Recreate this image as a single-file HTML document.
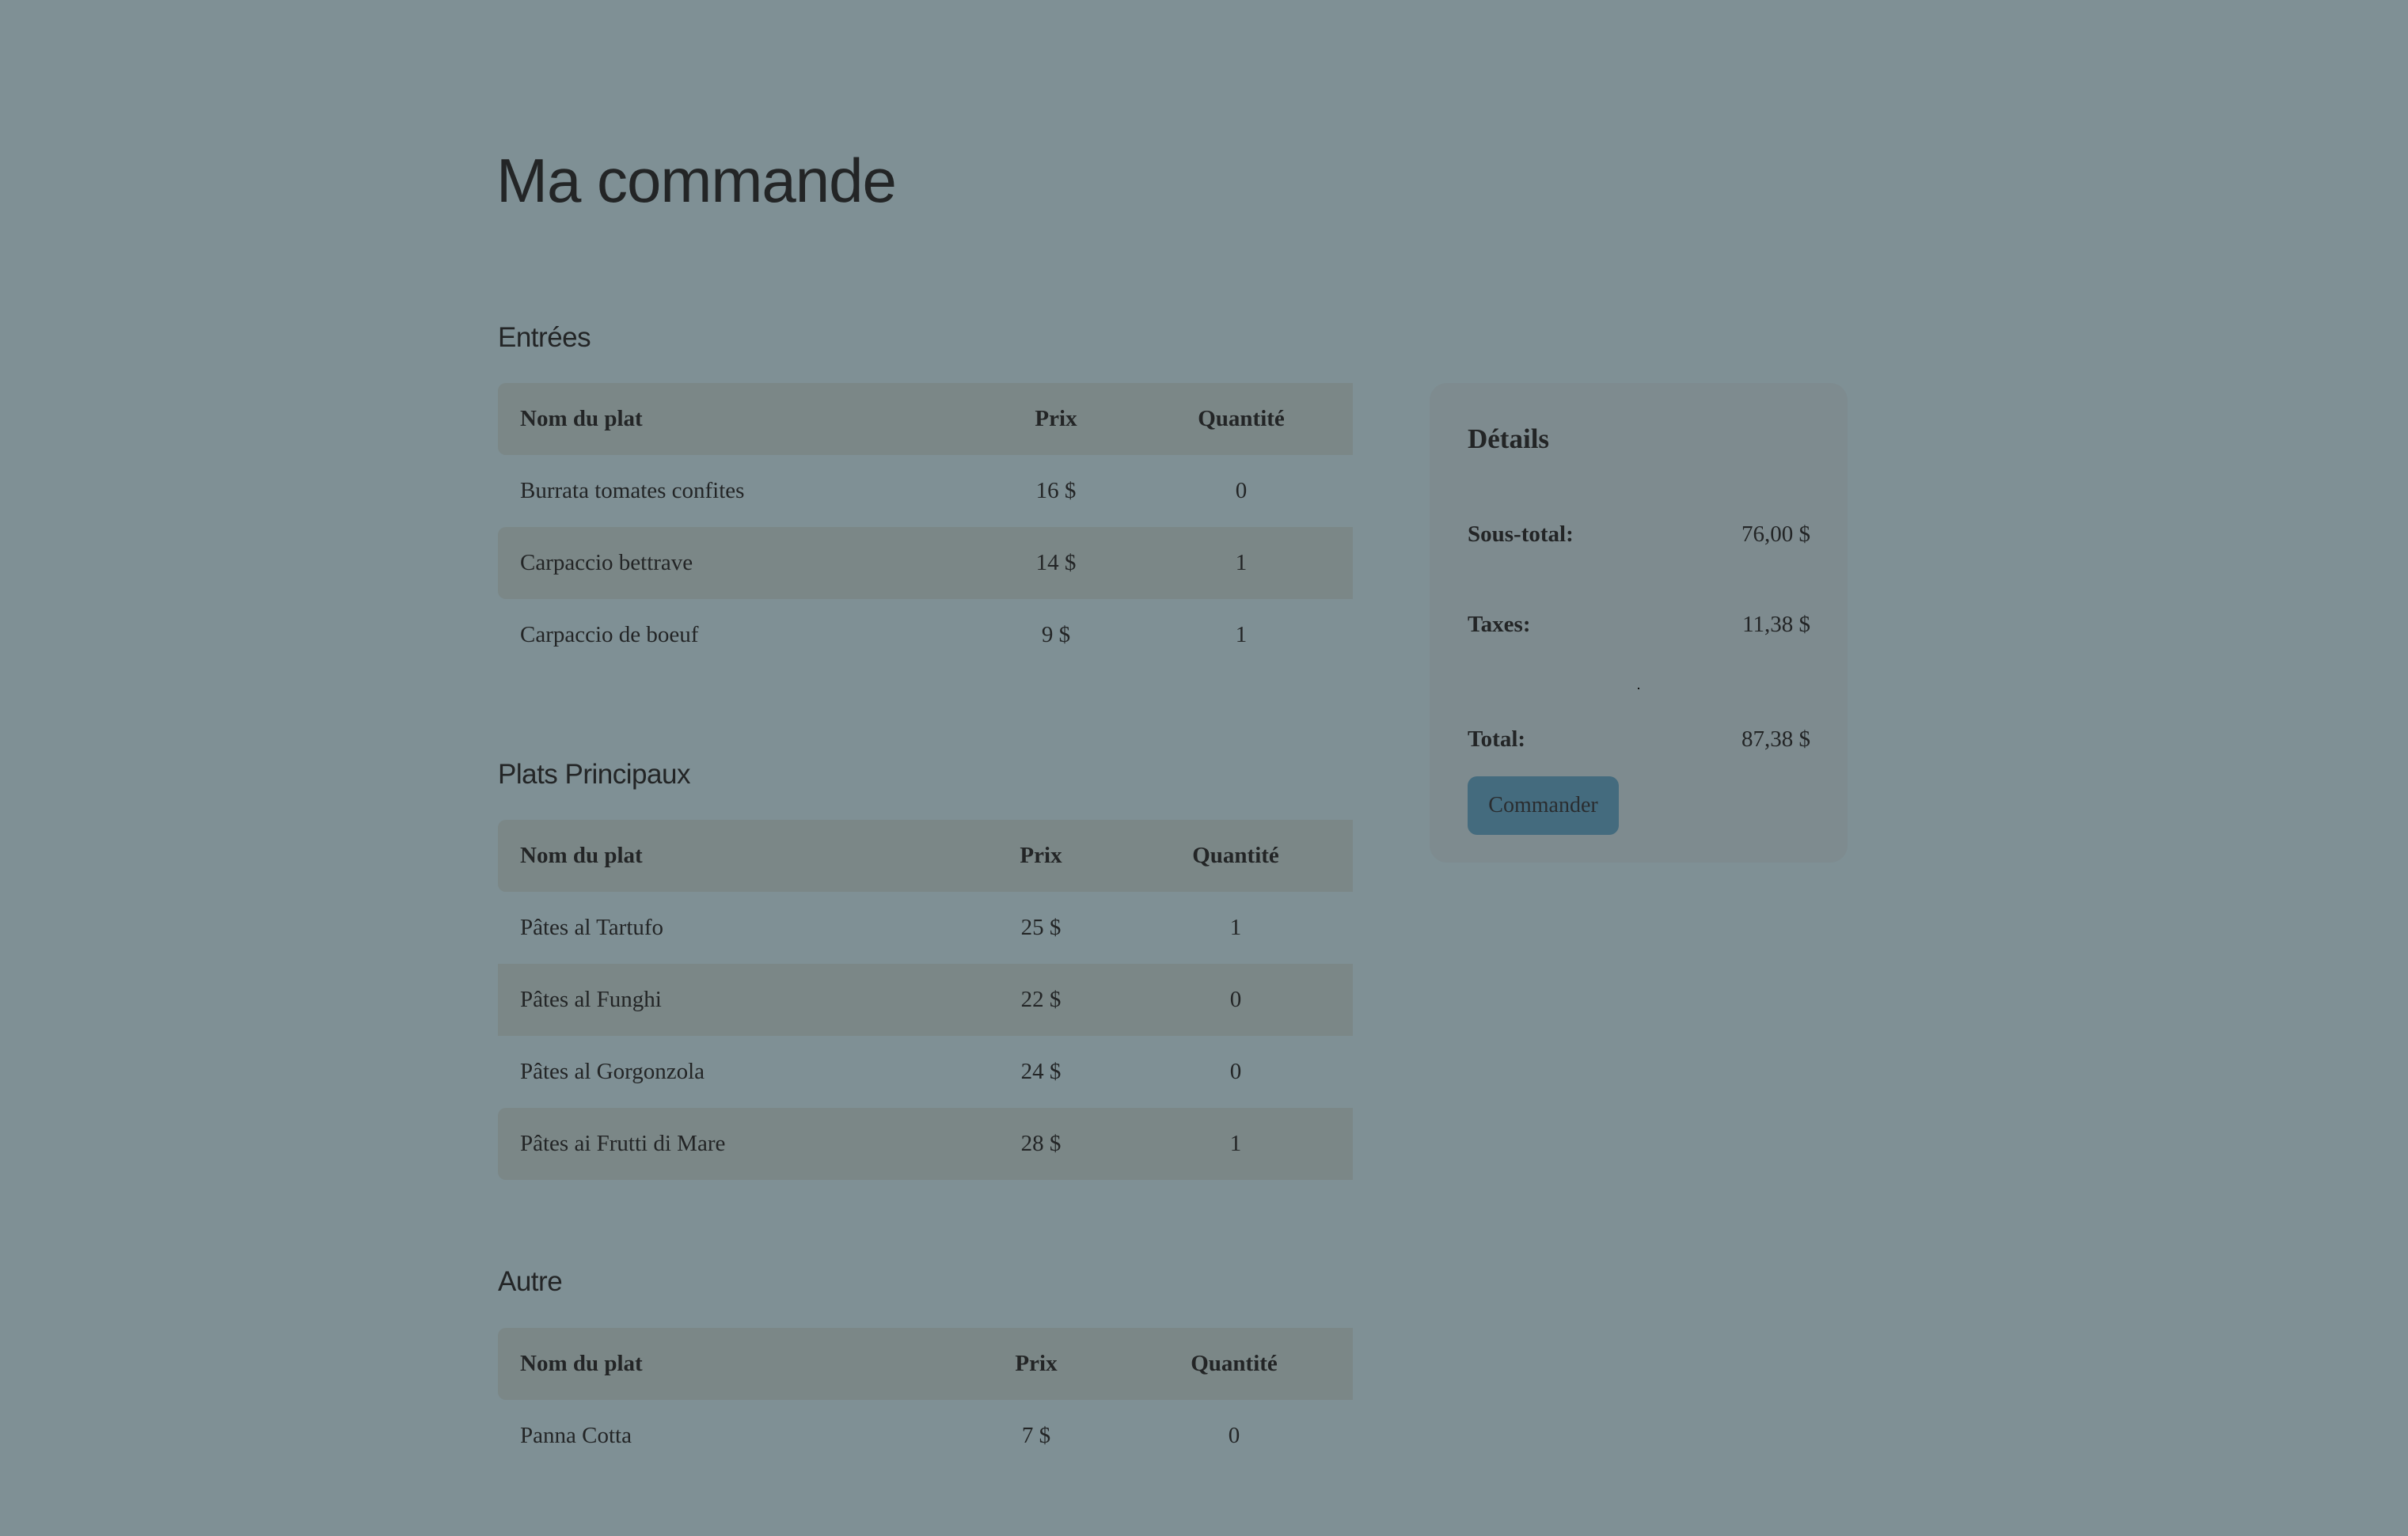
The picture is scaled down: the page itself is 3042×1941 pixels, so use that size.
<!DOCTYPE html>
<html><head><meta charset="utf-8"><style>
*{margin:0;padding:0;box-sizing:border-box}
html,body{width:3042px;height:1941px;overflow:hidden;background:#7f9095;color:#232526}
.s{font-family:"Liberation Sans",sans-serif;position:absolute;line-height:1;white-space:nowrap}
.r{position:absolute;left:629px;width:1080px;height:91px;font-family:"Liberation Serif",serif;font-size:29px;line-height:91px;white-space:nowrap}
.sh{background:#7b8787;border-radius:10px 0 0 10px}
.h{font-weight:bold}
.r span{position:absolute;top:0}
.n{left:28px}
.p,.q{width:200px;margin-left:-100px;text-align:center}
.d{position:absolute;font-family:"Liberation Serif",serif;font-size:29px;line-height:1;white-space:nowrap}
</style></head><body>
<div class="s" style="left:627px;top:189px;font-size:78px;letter-spacing:-1px">Ma commande</div>

<div class="s" style="left:629px;top:409px;font-size:35px;letter-spacing:-0.5px">Entrées</div>
<div class="r sh h" style="top:484px"><span class="n">Nom du plat</span><span class="p" style="left:705px">Prix</span><span class="q" style="left:939px">Quantité</span></div>
<div class="r" style="top:575px"><span class="n">Burrata tomates confites</span><span class="p" style="left:705px">16 $</span><span class="q" style="left:939px">0</span></div>
<div class="r sh" style="top:666px"><span class="n">Carpaccio bettrave</span><span class="p" style="left:705px">14 $</span><span class="q" style="left:939px">1</span></div>
<div class="r" style="top:757px"><span class="n">Carpaccio de boeuf</span><span class="p" style="left:705px">9 $</span><span class="q" style="left:939px">1</span></div>

<div class="s" style="left:629px;top:961px;font-size:35px;letter-spacing:-0.5px">Plats Principaux</div>
<div class="r sh h" style="top:1036px"><span class="n">Nom du plat</span><span class="p" style="left:686px">Prix</span><span class="q" style="left:932px">Quantité</span></div>
<div class="r" style="top:1127px"><span class="n">Pâtes al Tartufo</span><span class="p" style="left:686px">25 $</span><span class="q" style="left:932px">1</span></div>
<div class="r sh" style="top:1218px;border-radius:0"><span class="n">Pâtes al Funghi</span><span class="p" style="left:686px">22 $</span><span class="q" style="left:932px">0</span></div>
<div class="r" style="top:1309px"><span class="n">Pâtes al Gorgonzola</span><span class="p" style="left:686px">24 $</span><span class="q" style="left:932px">0</span></div>
<div class="r sh" style="top:1400px"><span class="n">Pâtes ai Frutti di Mare</span><span class="p" style="left:686px">28 $</span><span class="q" style="left:932px">1</span></div>

<div class="s" style="left:629px;top:1602px;font-size:35px;letter-spacing:-0.5px">Autre</div>
<div class="r sh h" style="top:1678px"><span class="n">Nom du plat</span><span class="p" style="left:680px">Prix</span><span class="q" style="left:930px">Quantité</span></div>
<div class="r" style="top:1769px"><span class="n">Panna Cotta</span><span class="p" style="left:680px">7 $</span><span class="q" style="left:930px">0</span></div>

<div style="position:absolute;left:1806px;top:484px;width:528px;height:606px;background:#7e8b8f;border-radius:22px"></div>
<div class="d" style="left:1854px;top:537px;font-size:35px;font-weight:bold">Détails</div>
<div class="d" style="left:1854px;top:661px;font-weight:bold">Sous-total:</div>
<div class="d" style="right:755px;top:661px">76,00 $</div>
<div class="d" style="left:1854px;top:775px;font-weight:bold">Taxes:</div>
<div class="d" style="right:755px;top:775px">11,38 $</div>
<div style="position:absolute;left:2069px;top:869px;width:2px;height:2px;background:#111"></div>
<div class="d" style="left:1854px;top:920px;font-weight:bold">Total:</div>
<div class="d" style="right:755px;top:920px">87,38 $</div>
<div style="position:absolute;left:1854px;top:981px;width:191px;height:74px;background:#446b7e;border-radius:12px;font-family:'Liberation Serif',serif;font-size:28px;line-height:74px;text-align:center;color:#2a2d30">Commander</div>
</body></html>
